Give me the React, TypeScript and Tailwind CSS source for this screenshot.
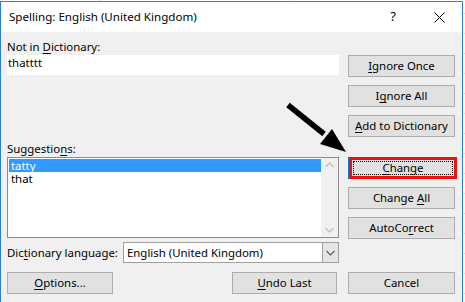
import React from "react";

const font = "font-['Noto_Sans','Open_Sans',sans-serif]";

function Btn({ children, className = "" }: { children: React.ReactNode; className?: string }) {
  return (
    <div
      className={`h-[22px] flex items-center justify-center bg-[#e1e1e1] border border-[#adadad] text-[11.4px] leading-none text-black whitespace-nowrap ${className}`}
    >
      <span>{children}</span>
    </div>
  );
}

function U({ children }: { children: React.ReactNode }) {
  return <span className="underline underline-offset-[2px] decoration-[1px]">{children}</span>;
}

export default function App() {
  return (
    <div
      className={`relative w-[465px] h-[302px] overflow-hidden bg-white bg-[linear-gradient(to_bottom,#dadada_1px,transparent_1px),linear-gradient(to_right,#dadada_1px,transparent_1px)] bg-[length:100%_20px,193px_100%] bg-[position:0_13px,100px_0] ${font}`}
    >
      <div className="mt-[1px] w-[463px] h-[301px] border-l border-t border-r border-[#2a80d8] flex flex-col">
        {/* title bar */}
        <div className="h-[30px] bg-white flex items-center shrink-0">
          <div className="pl-[8px] text-[11.6px] text-black flex-1 whitespace-nowrap">Spelling: English (United Kingdom)</div>
          <div className="w-[46px] h-full flex items-center justify-center text-[13px] text-black">?</div>
          <div className="w-[46px] h-full flex items-center justify-center">
            <svg width="11" height="11" viewBox="0 0 11 11">
              <path d="M0.5 0.5 L10.5 10.5 M10.5 0.5 L0.5 10.5" stroke="#000" strokeWidth="1" />
            </svg>
          </div>
        </div>

        {/* body */}
        <div className="flex-1 bg-[#f0f0f0] px-[6px] flex flex-col text-[11.4px] text-black whitespace-nowrap">
          <div className="flex gap-[9px]">
            {/* left column */}
            <div className="w-[332px] flex flex-col pt-[6px]">
              <div className="h-[17px] leading-[17px]">
                Not in <U>D</U>ictionary:
              </div>
              <div className="h-[20px] bg-white pl-[1px] leading-[16px]">thatttt</div>
              <div className="mt-[65px] h-[17px] leading-[17px]">
                Suggestio<U>n</U>s:
              </div>
              <div className="h-[81px] bg-white border border-[#8c8c8c] flex p-[1px] pr-0">
                <div className="flex-1 flex flex-col">
                  <div className="h-[13px] leading-[13px] bg-[#3399ff] text-white pl-[2px]">tatty</div>
                  <div className="h-[13px] leading-[13px] pl-[2px]">that</div>
                </div>
                <div className="w-[17px] -my-[1px] bg-[#f0f0f0] flex flex-col justify-between items-center py-[4px]">
                  <svg width="9" height="6" viewBox="0 0 9 6">
                    <path d="M0.5 5 L4.5 1 L8.5 5" stroke="#c2c2c2" strokeWidth="1.4" fill="none" />
                  </svg>
                  <svg width="9" height="6" viewBox="0 0 9 6">
                    <path d="M0.5 1 L4.5 5 L8.5 1" stroke="#c2c2c2" strokeWidth="1.4" fill="none" />
                  </svg>
                </div>
              </div>
              <div className="mt-[4px] h-[21px] flex items-center">
                <div className="w-[116px] whitespace-nowrap">
                  Dic<U>t</U>ionary language:
                </div>
                <div className="flex-1 h-full bg-white border border-[#a0a0a0] flex">
                  <div className="flex-1 pl-[3px] flex items-center">
                    <span>English (United Kingdom)</span>
                  </div>
                  <div className="w-[16px] bg-[#e5e5e5] border-l border-[#a0a0a0] flex items-center justify-center">
                    <svg width="9" height="6" viewBox="0 0 9 6">
                      <path d="M0.5 1 L4.5 5 L8.5 1" stroke="#555" strokeWidth="1.1" fill="none" />
                    </svg>
                  </div>
                </div>
              </div>
            </div>

            {/* right column */}
            <div className="w-[107px] flex flex-col pt-[23px]">
              <Btn>
                <U>I</U>gnore Once
              </Btn>
              <Btn className="mt-[8px]">
                I<U>g</U>nore All
              </Btn>
              <Btn className="mt-[8px]">
                <U>A</U>dd to Dictionary
              </Btn>
              <div className="mt-[20px] h-[22px] w-[109px] border-l border-[#0078d7] flex">
                <div className="flex-1 border-[3px] border-[#ee1111] bg-[#e1e1e1] p-[1px] flex">
                  <div className="flex-1 border border-dotted border-black flex items-center justify-center leading-none">
                    <span>
                      <U>C</U>hange
                    </span>
                  </div>
                </div>
              </div>
              <Btn className="mt-[8px]">
                Change <U>A</U>ll
              </Btn>
              <Btn className="mt-[8px] h-[21px]">
                AutoCo<U>r</U>rect
              </Btn>
            </div>
          </div>

          {/* bottom row */}
          <div className="mt-[9px] flex">
            <Btn className="w-[106px] h-[21px]">
              <U>O</U>ptions...
            </Btn>
            <Btn className="ml-[119px] w-[105px] h-[21px]">
              <U>U</U>ndo Last
            </Btn>
            <Btn className="ml-[11px] w-[107px] h-[21px]">Cancel</Btn>
          </div>
        </div>
      </div>

      {/* annotation arrow */}
      <svg className="absolute left-0 top-0 pointer-events-none" width="465" height="302" viewBox="0 0 465 302">
        <line x1="288" y1="105" x2="324" y2="134" stroke="#000" strokeWidth="5.5" />
        <polygon points="346,152 332,129 320,144" fill="#000" />
      </svg>
    </div>
  );
}
